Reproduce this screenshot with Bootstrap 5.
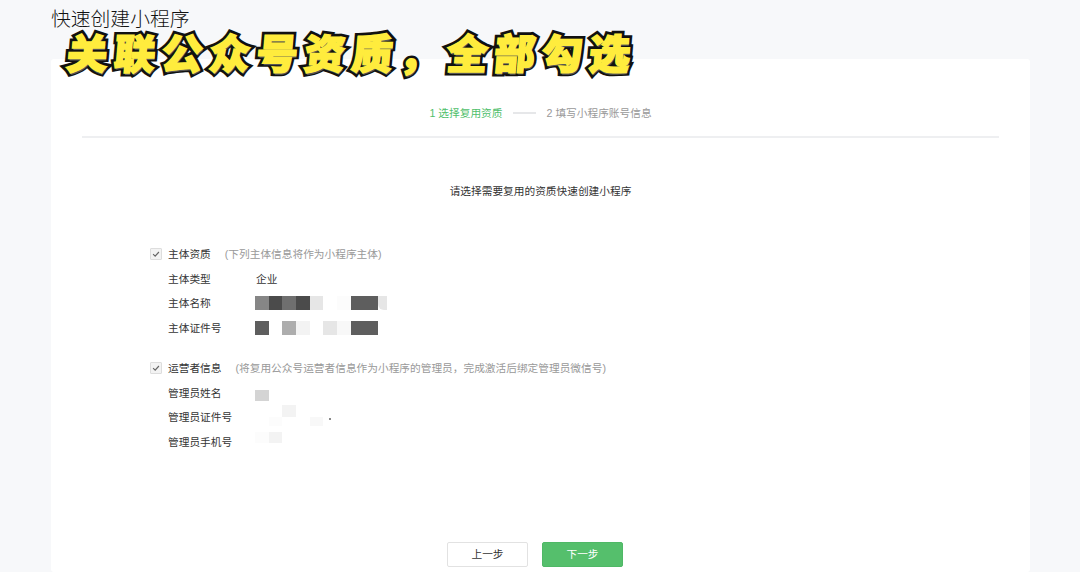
<!DOCTYPE html>
<html lang="zh">
<head>
<meta charset="utf-8">
<title>快速创建小程序</title>
<link href="https://cdn.jsdelivr.net/npm/bootstrap@5.3.0/dist/css/bootstrap.min.css" rel="stylesheet">
<style>
html,body{height:572px;overflow:hidden}
body{background:#f7f8fa;font-family:"Liberation Sans","Noto Sans CJK SC",sans-serif;font-size:10.7px;color:#353535;position:relative}
.page-title{font-size:19.8px;line-height:24px;color:#111;font-weight:300;margin:0;padding:7px 0 0 51px;height:59px}
.sheet{background:#fff;margin:0 50px 0 51px;height:513px;padding:0 31px;border-radius:3px}
.promo{position:absolute;left:67px;top:23px;margin:0;font-size:41px;line-height:56px;font-weight:900;color:#ffec3d;font-family:"Noto Sans CJK SC",sans-serif;letter-spacing:6.5px;white-space:pre;-webkit-text-stroke:7px #111;paint-order:stroke fill;transform:skewX(-5deg);text-shadow:1px 2px 0 #555}
.promo::after{content:attr(data-face);position:absolute;left:0;top:0;-webkit-text-stroke:1.6px #ffec3d;text-shadow:none}
.stepper{height:79px;border-bottom:2px solid #eeeff1;padding-top:47px;line-height:14px;color:#999;font-size:10.7px;gap:10.5px}
.step-on{color:#4fc06b}
.step-line{width:23px;height:2px;background:#e6e7e9;margin-top:6px}
.lead-line{margin:0;padding-top:46px;line-height:14px;text-align:center;color:#333}
.form-zone{padding:44px 0 0 68px}
.tick-row{height:24.6px;gap:6px}
.tick{width:12px;height:12px;border:1px solid #ddd;background:#f3f3f3;border-radius:1px}
.note{color:#999;margin-left:8px}
.info-row{height:24.6px;padding-left:18px;align-items:center}
.info-key{width:87px;line-height:14px}
.biz-type{margin-left:1px}
.mosaic{display:flex;height:14px;align-items:flex-start}
.mosaic i{display:block;width:13.7px;height:14px;flex:none}
.cut{width:9px!important;border-bottom-left-radius:6px}
.high{height:12px!important;margin-top:-5px}
.low{height:9px!important;margin-top:7px}
.mid{height:11px!important;margin-top:4px}
.up{height:11px!important;margin-top:-3px}
.mosaic .speck{width:1.5px;height:1.5px;background:#888;margin:8px 0 0 6px}
.t0{background:none}.t1{background:#fcfcfc}.t2{background:#f8f8f8}.t3{background:#f3f3f3}.t4{background:#e6e6e6}.t5{background:#d4d4d4}.t6{background:#adadad}.t7{background:#868686}.t8{background:#6f6f6f}.t9{background:#5e5e5e}.t10{background:#4b4b4b}
.group-gap{margin-top:15.4px}
.actions{padding:87.4px 11px 0 0;gap:14px;justify-content:center}
.act{width:81px;height:25px;padding:0;font-size:10.7px;line-height:23px;border-radius:2px}
.act-plain{background:#fff;border:1px solid #e2e2e2;color:#333}
.act-go{background:#55bf6c;border:1px solid #4fb866;color:#fff}
</style>
</head>
<body>
<h1 class="page-title">快速创建小程序</h1>
<p class="promo" data-face="关联公众号资质，全部勾选">关联公众号资质，全部勾选</p>
<main class="sheet">
  <div class="stepper d-flex justify-content-center">
    <span class="step-on">1 选择复用资质</span>
    <span class="step-line align-self-start"></span>
    <span>2 填写小程序账号信息</span>
  </div>
  <p class="lead-line">请选择需要复用的资质快速创建小程序</p>
  <div class="form-zone">
    <div class="tick-row d-flex align-items-center">
      <svg class="tick" viewBox="0 0 12 12"><path d="M2.5 6.2l2.5 2.4L9.5 3.6" fill="none" stroke="#666" stroke-width="1.4"/></svg>
      <span>主体资质</span><span class="note">(下列主体信息将作为小程序主体)</span>
    </div>
    <div class="info-row d-flex"><span class="info-key">主体类型</span><span class="biz-type">企业</span></div>
    <div class="info-row d-flex"><span class="info-key">主体名称</span>
      <div class="mosaic"><i class="t7"></i><i class="t10"></i><i class="t8"></i><i class="t10"></i><i class="t4"></i><i class="t0"></i><i class="t1"></i><i class="t9"></i><i class="t9"></i><i class="t4 cut"></i></div>
    </div>
    <div class="info-row d-flex"><span class="info-key">主体证件号</span>
      <div class="mosaic"><i class="t9"></i><i class="t0"></i><i class="t6"></i><i class="t3"></i><i class="t0"></i><i class="t4"></i><i class="t2"></i><i class="t9"></i><i class="t9"></i></div>
    </div>
    <div class="tick-row d-flex align-items-center group-gap">
      <svg class="tick" viewBox="0 0 12 12"><path d="M2.5 6.2l2.5 2.4L9.5 3.6" fill="none" stroke="#666" stroke-width="1.4"/></svg>
      <span>运营者信息</span><span class="note">(将复用公众号运营者信息作为小程序的管理员，完成激活后绑定管理员微信号)</span>
    </div>
    <div class="info-row d-flex"><span class="info-key">管理员姓名</span>
      <div class="mosaic"><i class="t5 mid"></i></div>
    </div>
    <div class="info-row d-flex"><span class="info-key">管理员证件号</span>
      <div class="mosaic"><i class="t0"></i><i class="t1 low"></i><i class="t3 high"></i><i class="t0"></i><i class="t2 low"></i><i class="speck"></i></div>
    </div>
    <div class="info-row d-flex"><span class="info-key">管理员手机号</span>
      <div class="mosaic"><i class="t1 up"></i><i class="t3 up"></i></div>
    </div>
  </div>
  <div class="actions d-flex">
    <button type="button" class="btn act act-plain">上一步</button>
    <button type="button" class="btn act act-go">下一步</button>
  </div>
</main>
</body>
</html>
